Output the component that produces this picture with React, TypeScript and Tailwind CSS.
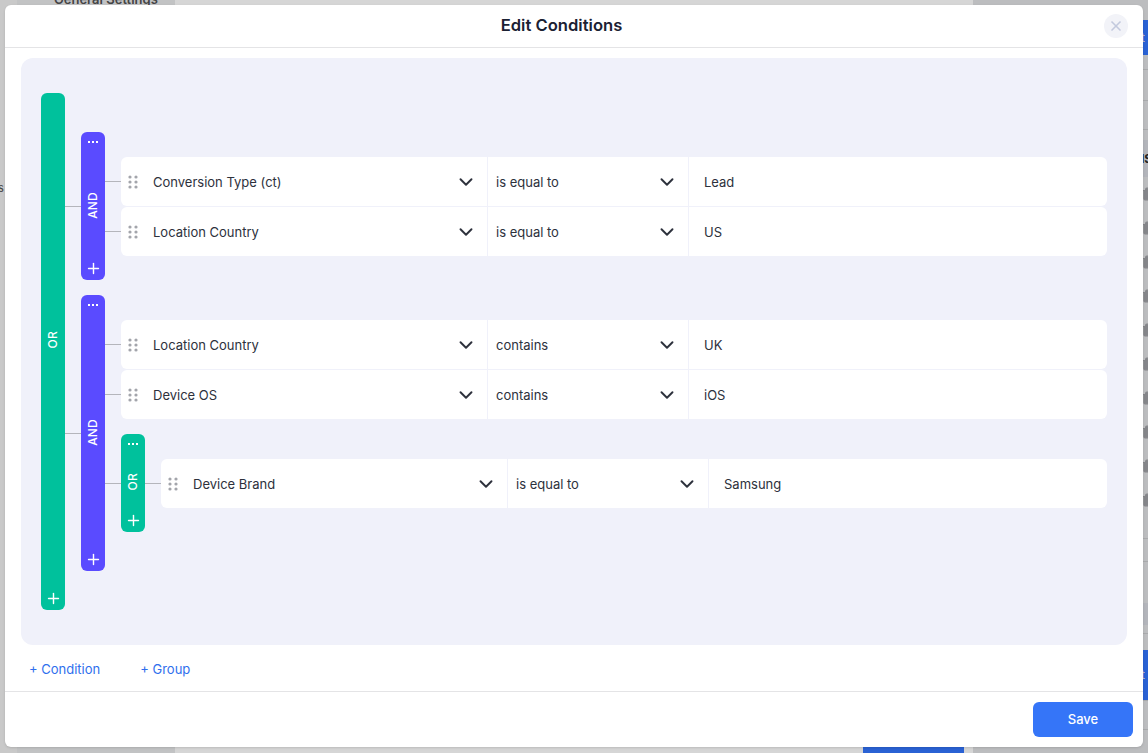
import { ChevronDown, Plus, Trash2, X } from "lucide-react";
import type { ReactNode } from "react";

const font = { fontFamily: "Inter, sans-serif" };

function Grip() {
  return (
    <svg width="10" height="14" viewBox="0 0 10 14" className="shrink-0 text-[#a3a5ab]" fill="currentColor">
      <circle cx="2" cy="2" r="1.6" />
      <circle cx="8" cy="2" r="1.6" />
      <circle cx="2" cy="7" r="1.6" />
      <circle cx="8" cy="7" r="1.6" />
      <circle cx="2" cy="12" r="1.6" />
      <circle cx="8" cy="12" r="1.6" />
    </svg>
  );
}

function Dots() {
  return (
    <div className="flex gap-[2px] h-[2px]">
      <span className="w-[2px] h-[2px] bg-white" />
      <span className="w-[2px] h-[2px] bg-white" />
      <span className="w-[2px] h-[2px] bg-white" />
    </div>
  );
}

function Row({ field, op, value }: { field: string; op: string; value: string }) {
  return (
    <div className="flex-1 flex h-[49px] bg-white rounded-md text-[13px] text-[#2d313c]">
      <div className="flex-[1_1_0px] flex items-center pl-[7px] pr-[10px]">
        <Grip />
        <span className="ml-[15px] flex-1 pt-[2px]">{field}</span>
        <ChevronDown size={22} strokeWidth={2.1} className="text-[#2d313c]" />
      </div>
      <div className="w-[202px] flex items-center pl-2 pr-[10px] border-x border-[#f0f1fa]">
        <span className="flex-1 pt-[2px]">{op}</span>
        <ChevronDown size={22} strokeWidth={2.1} className="text-[#2d313c]" />
      </div>
      <div className="flex-[1_1_69px] flex items-center pl-[15px] pt-[2px]">{value}</div>
    </div>
  );
}

function Group({
  label,
  color,
  className,
  labelClass,
  hideDots,
  children,
}: {
  label: string;
  color: string;
  className: string;
  labelClass?: string;
  hideDots?: boolean;
  children: ReactNode;
}) {
  return (
    <div className="flex flex-1 items-stretch">
      <div className={`w-6 shrink-0 rounded-md flex flex-col items-center text-white ${color}`}>
        <div className="h-5 flex items-center">{!hideDots && <Dots />}</div>
        <div className={`flex-1 flex items-center justify-center pt-[2px] ${labelClass ?? ""}`}>
          <span className="[writing-mode:vertical-rl] rotate-180 text-xs font-medium tracking-[0.2px]">{label}</span>
        </div>
        <div className="h-6 flex items-center">
          <Plus size={17} strokeWidth={2} />
        </div>
      </div>
      <div className={`flex-1 flex flex-col ${className}`}>{children}</div>
    </div>
  );
}

function Branch({ children }: { children: ReactNode }) {
  return (
    <div className="flex items-center">
      <div className="w-4 h-px bg-[#b4b5bb] shrink-0" />
      {children}
    </div>
  );
}

function Backdrop() {
  const rows = Array.from({ length: 10 }, (_, i) => i);
  return (
    <div className="absolute inset-0 flex bg-[#d6d6d6] overflow-hidden text-[#333]" style={font}>
      <div className="w-[175px] shrink-0 flex bg-[#c9c9c9]">
        <div className="w-[17px] pt-[180px] text-[11px] leading-4 text-[#444] -ml-[2px]">s</div>
        <div className="flex-1 bg-[#c2c3c4] pl-[37px] ml-[2px] overflow-hidden">
          <div className="-mt-[9px] text-[13px] font-semibold leading-4 text-[#444]">General Settings</div>
        </div>
      </div>
      <div className="flex-1 flex flex-col items-end justify-end">
        <div className="w-[101px] h-[6px] bg-[#2a62d4] mr-[9px]" />
      </div>
      <div className="w-[175px] shrink-0 bg-[#bcbdbf] flex flex-col">
        <div className="h-[35px] mt-5 pl-[168px] bg-transparent">
          <div className="h-full bg-[#2a62d4] text-[#bbb] text-xs leading-[35px]">t</div>
        </div>
        <div className="h-[15px] border-b border-[#a9aaac]" />
        <div className="h-[31px] border-b border-[#a9aaac]" />
        <div className="h-[29px] border-b border-[#a9aaac]" />
        <div className="h-[37px] mt-[10px] bg-[#b3b5bb] pl-[168px] flex items-center text-xs font-bold text-[#222]">IS</div>
        {rows.map((r) => (
          <div key={r} className="h-[34px] pl-[168px] flex items-center text-[#85868a]">
            <Trash2 size={14} fill="currentColor" className="shrink-0" />
          </div>
        ))}
        <div className="h-[22px] border-b border-[#a9aaac]" />
        <div className="h-[23px] border-b border-[#a9aaac]" />
        <div className="h-[22px] mt-[41px] bg-[#b3b5bb]" />
        <div className="h-[9px] border-b border-[#a9aaac]" />
        <div className="h-[50px] mt-[16px] pl-[168px]">
          <div className="h-full bg-[#2a62d4] text-[#bbb] text-xs leading-[50px]">t</div>
        </div>
        <div className="h-[30px] border-y border-[#a9aaac] mb-[11px]" />
        <div className="h-[6px] pl-[28px] overflow-hidden">
          <div className="text-sm leading-4 -mt-[8px]">Search...</div>
        </div>
      </div>
    </div>
  );
}

export default function App() {
  return (
    <div className="relative w-[1148px] h-[753px] overflow-hidden" style={font}>
      <Backdrop />
      <div className="absolute left-[5px] top-[5px] w-[1138px] h-[742px] bg-white rounded-md shadow flex flex-col">
        <div className="h-[43px] shrink-0 border-b border-[#e4e4e6] flex items-center justify-center pr-[25px] relative">
          <h1 className="text-[16.6px] font-semibold text-[#1b2133] -mt-[1px]">Edit Conditions</h1>
          <button className="absolute right-[15px] top-[9px] w-6 h-6 rounded-full bg-[#f2f3f8] text-[#c3c9de] flex items-center justify-center">
            <X size={16} strokeWidth={2.5} />
          </button>
        </div>

        <div className="mx-4 mt-[10px] h-[587px] rounded-xl bg-[#f0f1fa] px-5 pt-[35px] shrink-0 flex">
          <div className="flex flex-1 h-[517px]">
            <Group label="OR" color="bg-[#00c19c]" className="py-[39px] gap-[15px]" labelClass="mb-[21px]" hideDots>
              <Branch>
                <Group label="AND" color="bg-[#5a4bff]" className="pt-[25px] pb-6 gap-px">
                  <Branch><Row field="Conversion Type (ct)" op="is equal to" value="Lead" /></Branch>
                  <Branch><Row field="Location Country" op="is equal to" value="US" /></Branch>
                </Group>
              </Branch>
              <Branch>
                <Group label="AND" color="bg-[#5a4bff]" className="pt-[25px] pb-[39px]">
                  <div className="flex flex-col gap-px mb-[15px]">
                    <Branch><Row field="Location Country" op="contains" value="UK" /></Branch>
                    <Branch><Row field="Device OS" op="contains" value="iOS" /></Branch>
                  </div>
                  <Branch>
                    <Group label="OR" color="bg-[#00c19c]" className="pt-[25px] pb-6">
                      <Branch><Row field="Device Brand" op="is equal to" value="Samsung" /></Branch>
                    </Group>
                  </Branch>
                </Group>
              </Branch>
            </Group>
          </div>
        </div>

        <div className="h-[46px] pt-1 shrink-0 flex items-center gap-10 pl-[24px] text-[13px] text-[#2f6fed]">
          <span>+ Condition</span>
          <span>+ Group</span>
        </div>

        <div className="flex-1 border-t border-[#e4e4e6] flex items-center justify-end pr-[10px]">
          <button className="w-[100px] h-[35px] rounded-md bg-[#3575f8] text-white text-[13px] font-medium">Save</button>
        </div>
      </div>
    </div>
  );
}
